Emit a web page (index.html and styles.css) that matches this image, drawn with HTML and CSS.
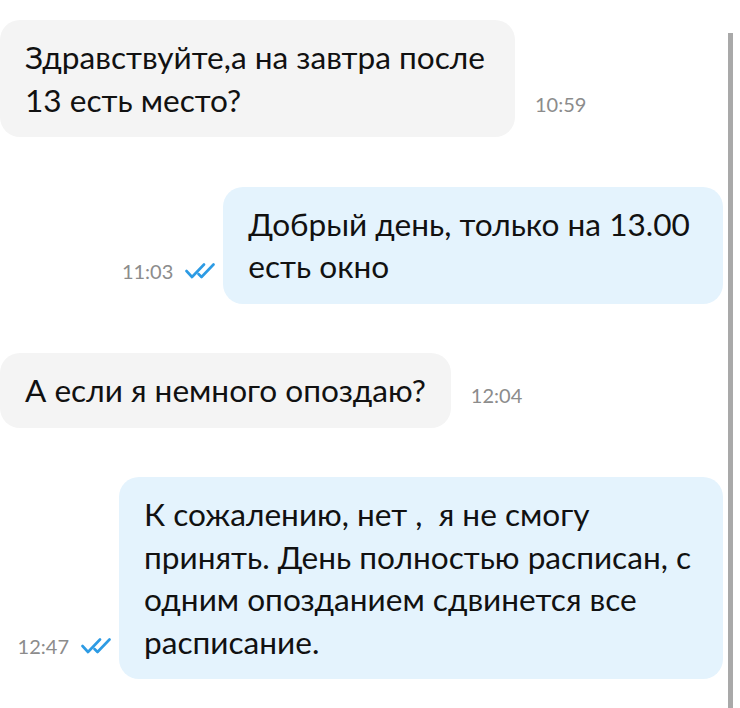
FILE: index.html
```html
<!DOCTYPE html>
<html lang="ru">
<head>
  <meta charset="UTF-8">
  <title>Чат</title>
  <link rel="stylesheet" href="styles.css">
</head>
<body>

  <div class="chat">
    <div class="msg in">
      <div class="bubble">Здравствуйте,а на завтра после 13 есть место?</div>
      <span class="time">10:59</span>
    </div>

    <div class="msg out">
      <span class="time">11:03</span>
      <svg class="ticks" viewBox="0 0 30 16" width="30" height="16">
        <path d="M1.5 8 L7 14 L19 1.5" />
        <path d="M13.5 11 L16.5 14 L28.5 1.5" />
      </svg>
      <div class="bubble">Добрый день, только на 13.00&nbsp;<br>есть окно</div>
    </div>

    <div class="msg in">
      <div class="bubble">А если я немного опоздаю?</div>
      <span class="time">12:04</span>
    </div>

    <div class="msg out">
      <span class="time">12:47</span>
      <svg class="ticks" viewBox="0 0 30 16" width="30" height="16">
        <path d="M1.5 8 L7 14 L19 1.5" />
        <path d="M13.5 11 L16.5 14 L28.5 1.5" />
      </svg>
      <div class="bubble">К сожалению, нет , &nbsp;я не смогу принять. День полностью расписан, с одним опозданием сдвинется все расписание.</div>
    </div>

    <div class="scroll-thumb"></div>
  </div>

</body>
</html>
```

FILE: styles.css
```css
body {
  margin: 0;
  background: #fff;
  font-family: Lato, "Noto Sans", sans-serif;
  color: #111;
}

.chat {
  position: relative;
  height: 708px;
  box-sizing: border-box;
  padding: 20px 17px 0 0;
  display: flex;
  flex-direction: column;
  gap: 49.5px;
  overflow: hidden;
}

.msg {
  display: flex;
  align-items: flex-end;
}

.msg.out {
  justify-content: flex-end;
}

.bubble {
  font-size: 31.6px;
  line-height: 42.5px;
  padding: 16px 25px;
  border-radius: 20px;
}

.in .bubble {
  background: #f4f4f4;
  max-width: 465px;
}

.out .bubble {
  background: #e4f3fd;
  max-width: 554px;
  margin-left: 8px;
}

.time {
  font-size: 20px;
  line-height: 24px;
  color: #8c8c8c;
  margin-bottom: 21px;
}

.in .time {
  margin-left: 20px;
}

.ticks {
  margin: 0 0 25px 12px;
  fill: none;
  stroke: #2d9be4;
  stroke-width: 2.6;
  stroke-linecap: round;
  stroke-linejoin: round;
}

.scroll-thumb {
  position: absolute;
  right: 7px;
  top: 33px;
  bottom: 0;
  width: 5px;
  background: #a9a9a9;
}
```
